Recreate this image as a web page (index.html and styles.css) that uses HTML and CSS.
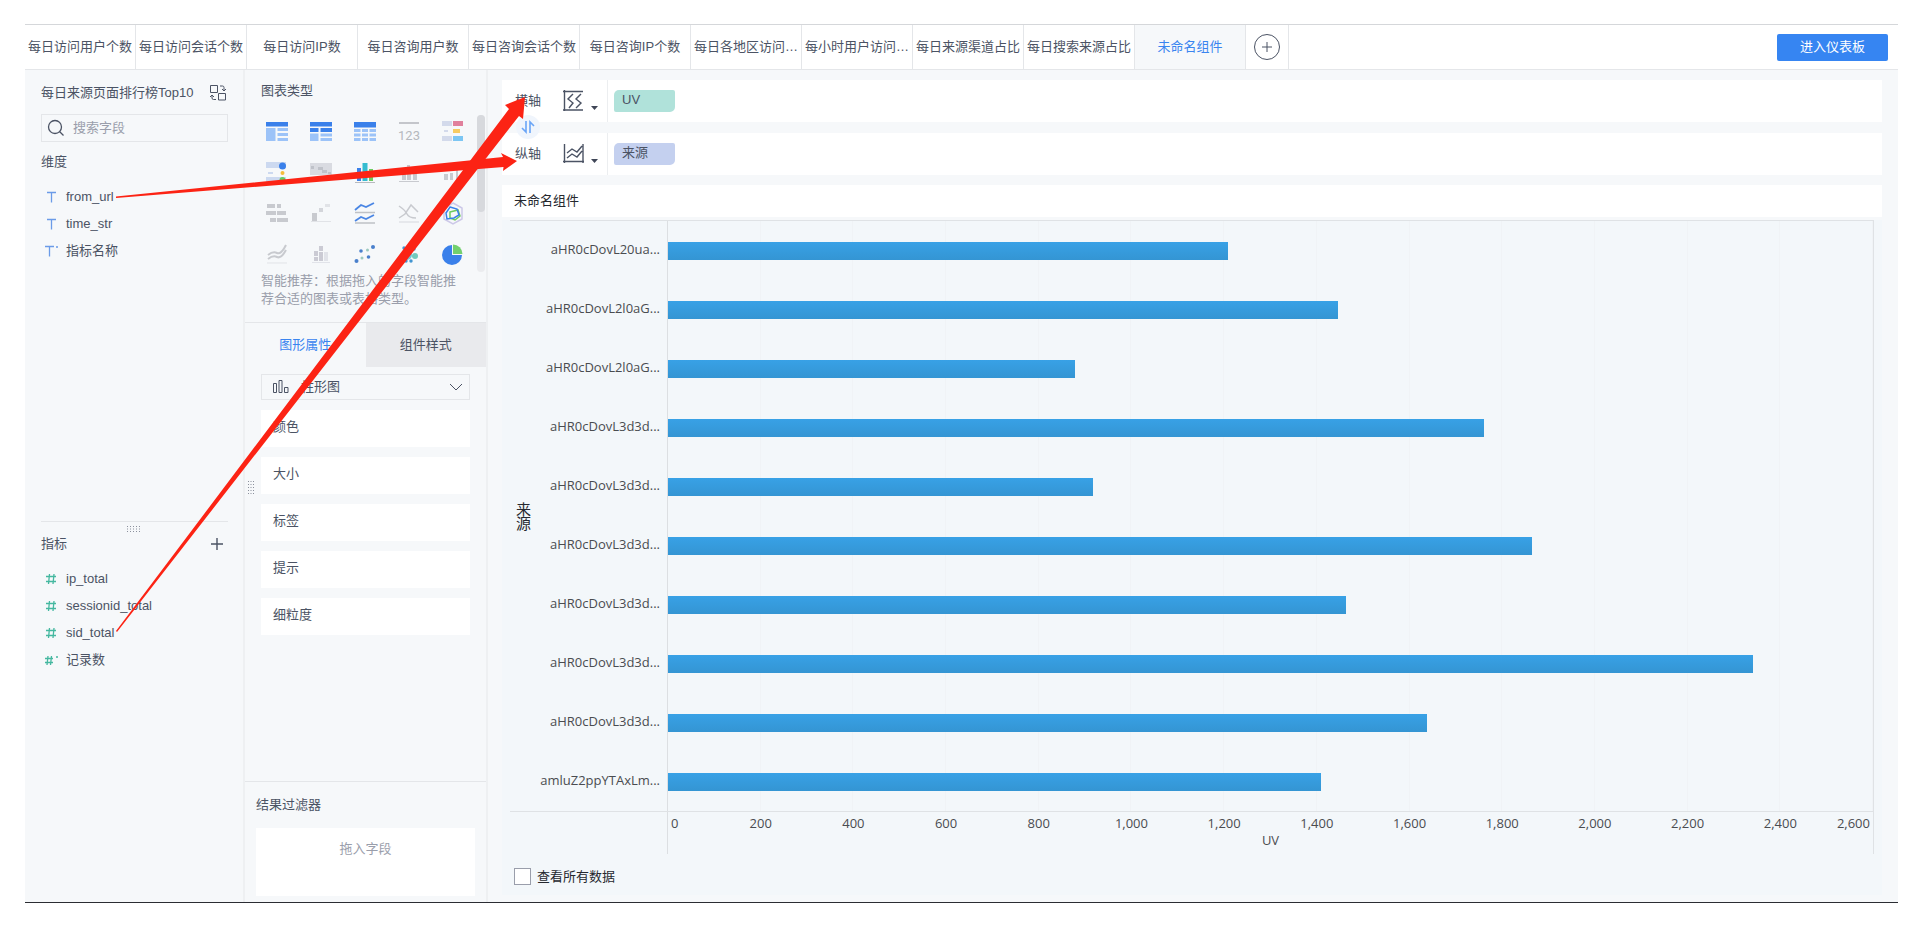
FILE: index.html
```html
<!DOCTYPE html>
<html lang="zh-CN">
<head>
<meta charset="utf-8">
<title>未命名组件</title>
<link rel="stylesheet" href="styles.css">
</head>
<body>
<div class="app">
  <header class="topbar">
    <nav class="tabs">
      <button class="tab">每日访问用户个数</button>
      <button class="tab">每日访问会话个数</button>
      <button class="tab">每日访问IP数</button>
      <button class="tab">每日咨询用户数</button>
      <button class="tab">每日咨询会话个数</button>
      <button class="tab">每日咨询IP个数</button>
      <button class="tab">每日各地区访问…</button>
      <button class="tab">每小时用户访问…</button>
      <button class="tab">每日来源渠道占比</button>
      <button class="tab">每日搜索来源占比</button>
      <button class="tab tab-active">未命名组件</button>
      <button class="tab-add" aria-label="添加组件"><svg width="28" height="28" viewBox="0 0 28 28" fill="none" stroke="#4b5364"><circle cx="14" cy="14" r="12.5"/><path d="M9 14h10M14 9v10"/></svg></button>
    </nav>
    <button class="enter">进入仪表板</button>
  </header>

  <div class="body">
    <aside class="fields">
      <section class="dims">
        <div class="table-head">
          <span>每日来源页面排行榜Top10</span>
          <button class="icon-btn" aria-label="切换表"><svg width="18" height="18" viewBox="0 0 18 18" fill="none" stroke="#4b5364"><path d="M1.500 1.500h7v7h-7zM9.500 9.500h7v6.500h-7zM11 2h2.500q1.500 0 1.500 1.500v3M13 5l2 2 2-2M7 15.500h-2.500q-1.500 0-1.500-1.500v-3M1 13l2-2 2 2"/></svg></button>
        </div>
        <label class="search">
          <svg width="18" height="18" viewBox="0 0 18 18" fill="none" stroke="#4b5364" stroke-width="1.300"><circle cx="8" cy="8" r="6.500"/><path d="M12.500 12.500l4 4"/></svg>
          <input type="text" placeholder="搜索字段" aria-label="搜索字段">
        </label>
        <h2 class="title">维度</h2>
        <ul class="list">
          <li><svg class="dim-icon" viewBox="0 0 14 14"><path d="M1 2.500h9M5.500 2.500v10"/></svg>from_url</li>
          <li><svg class="dim-icon" viewBox="0 0 14 14"><path d="M1 2.500h9M5.500 2.500v10"/></svg>time_str</li>
          <li><svg class="dim-icon" viewBox="0 0 14 14"><path d="M-1 2.500h9M3.500 2.500v10M10 3h2"/></svg>指标名称</li>
        </ul>
      </section>
      <section class="measures">
        <svg class="grip-h" width="15" height="6" viewBox="0 0 15 6" stroke="#8b909c" stroke-dasharray="1 2"><path d="M0 .5h15M0 3h15M0 5.500h15"/></svg>
        <div class="measure-head">
          <h2 class="title">指标</h2>
          <button class="icon-btn" aria-label="添加指标"><svg width="14" height="14" viewBox="0 0 14 14" fill="none" stroke="#4b5364" stroke-width="1.400"><path d="M1 7h12M7 1v12"/></svg></button>
        </div>
        <ul class="list">
          <li><svg class="num-icon" viewBox="0 0 14 14"><path d="M0 4.500h10M0 9.500h10M3.500 2l-1 10M8 2l-1 10"/></svg>ip_total</li>
          <li><svg class="num-icon" viewBox="0 0 14 14"><path d="M0 4.500h10M0 9.500h10M3.500 2l-1 10M8 2l-1 10"/></svg>sessionid_total</li>
          <li><svg class="num-icon" viewBox="0 0 14 14"><path d="M0 4.500h10M0 9.500h10M3.500 2l-1 10M8 2l-1 10"/></svg>sid_total</li>
          <li><svg class="num-icon" viewBox="0 0 14 14"><path d="M-1 5.500h8M-1 9.500h8M2 3l-1 9M5.500 3l-1 9M10 4h2"/></svg>记录数</li>
        </ul>
      </section>
    </aside>

    <aside class="config">
      <section class="types">
        <h2 class="title">图表类型</h2>
        <div class="type-scroll">
          <div class="type-grid">
            <svg viewBox="0 0 22 20"><path fill="#3a80ea" d="M0 0h22v4.500H0z"/><path fill="#9cc3f8" d="M0 6h9.500v13H0zM11.500 6H22v3H11.500zM11.500 11H22v3H11.500zM11.500 16H22v3H11.500z"/></svg>
            <svg viewBox="0 0 22 20"><path fill="#3a80ea" d="M0 0h22v4.500H0zM0 6h8.500v4H0zM10.500 6H22v4H10.500z"/><path fill="#9cc3f8" d="M0 11.500h8.500V19H0zM10.500 11.500H22v3H10.500zM10.500 16H22v3H10.500z"/></svg>
            <svg viewBox="0 0 22 20"><path fill="#3a80ea" d="M0 0h22v5.500H0z"/><path fill="#9cc3f8" d="M0 7h6.500v3H0zM8 7h6v3H8zM15.500 7H22v3h-6.500zM0 11.500h6.500v3H0zM8 11.500h6v3H8zM15.500 11.500H22v3h-6.500zM0 16h6.500v3H0zM8 16h6v3H8zM15.500 16H22v3h-6.500z"/></svg>
            <svg viewBox="0 0 22 20"><path fill="#c4c6cb" d="M1 0h20v2H1z"/><text x="11" y="18" text-anchor="middle" class="kpi">123</text></svg>
            <svg viewBox="0 0 22 20"><path fill="#d3daeb" d="M0-1h10v5H0zM2 8h4v2H2zM0 14h10v5H0z"/><path fill="#e0809c" d="M11-1h10v5H11z"/><path fill="#f6cb62" d="M11 7h7v4h-7z"/><path fill="#7cc6f3" d="M11 14h10v5H11z"/></svg>
            <svg viewBox="0 0 22 20"><path fill="#ccd9f0" d="M0-1h20v6H0zM2 9h5v2H2zM0 14h20v5H0z"/><circle cx="16.500" cy="3" r="3.500" fill="#3a80ea"/><circle cx="16.500" cy="10" r="2" fill="#f5bd3a"/><circle cx="16.500" cy="17" r="3" fill="#62cf62"/></svg>
            <svg viewBox="0 0 22 20"><path fill="#d9dbe1" d="M0 0h22v12H0z"/><path fill="#bfc2c9" d="M1 3h3v3H1zM8 4h5v3H8zM12 7h5v3h-5zM18 9h3v2h-3z"/></svg>
            <svg viewBox="0 0 22 20"><path fill="#3a80ea" d="M3 5h4v6H3zM3 13h4v5H3z"/><path fill="#35bcd0" d="M8.500 0h5v11h-5zM8.500 13h5v5h-5z"/><path fill="#6ecb5e" d="M15 6h4v5h-4zM15 13h4v5h-4z"/><path fill="#b7babf" d="M1 19h20v1H1z"/></svg>
            <svg viewBox="0 0 22 20"><path fill="#c8cacf" d="M9 2h3v3H9zM4 11h4v6H4zM9 9h4v8H9zM15 11h4v6h-4zM1 18h20v1H1z"/></svg>
            <svg viewBox="0 0 22 20"><path fill="#c8cacf" d="M2 11h4v6H2zM8 10h3v7H8zM14 6h2v11h-2z"/></svg>
            <svg viewBox="0 0 22 20"><path fill="#c8cacf" d="M1 0h8v4H1zM11 0h4v4h-4zM0 7h10v4H0zM11 7h9v4h-9zM4 14h6v4H4zM11 14h11v4H11z"/></svg>
            <svg viewBox="0 0 22 20"><path fill="#c8cacf" d="M2 9h5v8H2z"/><path fill="#d3d5da" d="M9 4h4v4H9z"/><path fill="#e1e3e7" d="M15 0h5v3h-5zM1 17h20v1H1z"/></svg>
            <svg viewBox="0 0 22 20" fill="none" stroke="#4a86e4" stroke-width="1.800"><path d="M1 6L7 1l5 2 8-4M1 17l6-4 5 2 8-4"/><path stroke="#bfc1c6" stroke-width="1.500" d="M1 8.500h20M1 19h20"/></svg>
            <svg viewBox="0 0 22 20" fill="none" stroke="#c8cacf" stroke-width="1.500"><path d="M1 2q6 4 8 8t9 4M1 14l6-4 6-9 7 7"/><path stroke="#e1e3e7" d="M1 18h20"/></svg>
            <svg viewBox="0 0 22 20" fill="none" stroke-width="1.500"><path stroke="#ccc8e8" d="M11-1l9 5v11l-9 5-9-5V4z"/><path stroke="#6ecb5e" d="M8 8l8-2 2 6-5 4-5-2z"/><path stroke="#3a80ea" d="M8 3l7 2 2 6-5 3-7 1-1-6z"/></svg>
            <svg viewBox="0 0 22 20" fill="none" stroke="#c8cacf" stroke-width="2"><path d="M2 10q5-4 9-2t9-8M2 14q5-4 9-2t9-7"/><path stroke="#e1e3e7" stroke-width="1" d="M1 18h20"/></svg>
            <svg viewBox="0 0 22 20"><path fill="#cbcbd4" d="M4 6h4v5H4zM4 12h4v4H4zM9 1h4v5H9zM9 7h4v9H9z"/><path fill="#e1e3e9" d="M14 7h4v9h-4zM2 17h18v1H2z"/></svg>
            <svg viewBox="0 0 22 20"><g fill="#4a80cc"><circle cx="7" cy="6" r="1.800"/><circle cx="19" cy="2" r="2"/><circle cx="14.500" cy="12" r="1.800"/><circle cx="2.500" cy="16" r="2"/></g><g fill="#9cc9bf"><circle cx="13.500" cy="5" r="1.500"/><circle cx="8" cy="13" r="1.500"/></g></svg>
            <svg viewBox="0 0 22 20"><circle cx="9" cy="10" r="5" fill="#70c7d8"/><circle cx="17" cy="11" r="3" fill="#72c9bd"/><g fill="#4295d1"><circle cx="6" cy="3" r="1.700"/><circle cx="16" cy="4" r="1.700"/><circle cx="8" cy="16" r="1.700"/><circle cx="13" cy="16" r="1.700"/></g></svg>
            <svg viewBox="0 0 22 20"><path fill="#3a80ea" d="M10 0v10h10A10 10 0 1 1 10 0z"/><path fill="#73d06e" d="M11-.5a9.500 9.500 0 0 1 9.500 9.500H11z"/></svg>
          </div>
          <div class="scrollbar"><div class="thumb"></div></div>
        </div>
        <p class="hint">智能推荐：根据拖入的字段智能推荐合适的图表或表格类型。</p>
      </section>

      <section class="attrs">
        <div class="attr-tabs">
          <button class="attr-tab attr-active">图形属性</button>
          <button class="attr-tab">组件样式</button>
        </div>
        <div class="attr-list">
          <div class="shape">
            <svg width="16" height="14" viewBox="0 0 16 14" fill="none" stroke="#4b5364"><path d="M.5 3.500h3v9h-3zM6 .5h3v12H6zM11.500 7.500h3.500v5h-3.500z"/></svg>
            <select aria-label="图形"><option>柱形图</option></select>
            <svg width="14" height="8" viewBox="0 0 14 8" fill="none" stroke="#4b5364"><path d="M1 1l6 6 6-6"/></svg>
          </div>
          <div class="slot">颜色</div>
          <div class="slot">大小</div>
          <div class="slot">标签</div>
          <div class="slot">提示</div>
          <div class="slot">细粒度</div>
        </div>
        <svg class="grip-v" width="6" height="15" viewBox="0 0 6 15" stroke="#8b909c" stroke-dasharray="1 2"><path d="M.5 0v15M3 0v15M5.500 0v15"/></svg>
      </section>

      <section class="filter">
        <h2 class="title">结果过滤器</h2>
        <div class="drop">拖入字段</div>
      </section>
    </aside>

    <main class="work">
      <div class="shelves">
        <div class="shelf">
          <span class="shelf-name">横轴</span>
          <button class="axis-btn" aria-label="横轴设置"><svg width="36" height="22" viewBox="0 0 36 22" fill="none" stroke="#4b5364" stroke-width="1.400"><path d="M1.500 0v21M0 1.500h20M0 20h20M10 4l-5 5 5 4-4 5M18 4l-5 5 5 4-5 5"/><path fill="#3f4657" stroke="none" d="M28 16h7l-3.500 4z"/></svg></button>
          <span class="pill pill-green">UV</span>
        </div>
        <div class="shelf">
          <span class="shelf-name">纵轴</span>
          <button class="axis-btn" aria-label="纵轴设置"><svg width="36" height="22" viewBox="0 0 36 22" fill="none" stroke="#4b5364" stroke-width="1.400"><path d="M1.500 1v19M20 1v19M0 18.500h21M4 10l5-4 5 3 5-6M4 15l5-4 5 3 5-6"/><path fill="#3f4657" stroke="none" d="M28 16h7l-3.500 4z"/></svg></button>
          <span class="pill pill-blue">来源</span>
        </div>
        <button class="swap" aria-label="交换"><svg width="14" height="12" viewBox="0 0 14 12" fill="none" stroke="#6aa5f7" stroke-width="1.600"><path d="M5 0v11l-4-4M9 12V1l4 4"/></svg></button>
      </div>

      <h1 class="chart-title">未命名组件</h1>

      <div class="chart">
        <div class="frame">
          <div class="axis-name"><span>来源</span></div>
          <div class="cats">
            <span>aHR0cDovL20ua...</span><span>aHR0cDovL2l0aG...</span><span>aHR0cDovL2l0aG...</span><span>aHR0cDovL3d3d...</span><span>aHR0cDovL3d3d...</span><span>aHR0cDovL3d3d...</span><span>aHR0cDovL3d3d...</span><span>aHR0cDovL3d3d...</span><span>aHR0cDovL3d3d...</span><span>amluZ2ppYTAxLm...</span>
          </div>
          <div class="plot">
            <div class="row"><div class="bar" style="width:46.5%"></div></div>
            <div class="row"><div class="bar" style="width:55.6%"></div></div>
            <div class="row"><div class="bar" style="width:33.8%"></div></div>
            <div class="row"><div class="bar" style="width:67.7%"></div></div>
            <div class="row"><div class="bar" style="width:35.3%"></div></div>
            <div class="row"><div class="bar" style="width:71.7%"></div></div>
            <div class="row"><div class="bar" style="width:56.3%"></div></div>
            <div class="row"><div class="bar" style="width:90%"></div></div>
            <div class="row"><div class="bar" style="width:63%"></div></div>
            <div class="row"><div class="bar" style="width:54.2%"></div></div>
          </div>
        </div>
        <div class="x-axis">
          <div class="ticks">
            <span>0</span><span>200</span><span>400</span><span>600</span><span>800</span><span>1,000</span><span>1,200</span><span>1,400</span><span>1,600</span><span>1,800</span><span>2,000</span><span>2,200</span><span>2,400</span><span>2,600</span>
          </div>
          <div class="x-name">UV</div>
        </div>
        <label class="all-data"><input type="checkbox">查看所有数据</label>
      </div>
    </main>
  </div>

  <svg class="arrows" width="520" height="640" viewBox="0 0 520 640" aria-hidden="true">
    <path d="M91 171.500L478 132 476 128 492 136 478 146 478.500 142 91 173z"/>
    <path d="M91 606L484 84 480 80 500 72 498 94 494 91 92 607z"/>
  </svg>
</div>
</body>
</html>
```

FILE: styles.css
```css
* { box-sizing: border-box; }
body {
  margin: 0;
  min-height: 100vh;
  padding: 24px 10px 39px 25px;
  display: flex;
  background: #fff;
  color: #4b5364;
  font: 13px/18px "Liberation Sans", "Noto Sans CJK SC", sans-serif;
}
button, input, select { font: inherit; color: inherit; margin: 0; }
button { border: 0; padding: 0; background: none; cursor: pointer; }
svg { display: block; flex: none; overflow: visible; }
h1, h2, p, ul { margin: 0; padding: 0; }
.title { font-size: 13px; font-weight: 400; line-height: 18px; }

.app {
  position: relative;
  flex: 1;
  min-width: 0;
  display: flex;
  flex-direction: column;
  border-top: 1px solid #d5d7da;
  border-bottom: 1px solid #2b2d33;
  background: #f6f8fa;
}
.topbar {
  display: flex;
  align-items: center;
  justify-content: space-between;
  padding-right: 10px;
  height: 45px;
  background: #fff;
  border-bottom: 1px solid #e4e6e9;
}
.tabs { display: flex; align-self: stretch; }
.tab {
  width: 111px;
  border-right: 1px solid #e4e6e9;
  white-space: nowrap;
}
.tab-active { color: #3a85f0; background: #f6f8fa; }
.tab-add {
  width: 43px;
  display: grid;
  place-items: center;
  border-right: 1px solid #e4e6e9;
}
.enter {
  width: 111px;
  height: 27px;
  border-radius: 2px;
  background: #3685f2;
  color: #fff;
}

.body { flex: 1; display: flex; min-height: 0; }

.fields {
  width: 220px;
  display: flex;
  flex-direction: column;
  padding: 0 15px 0 16px;
  border-right: 2px solid #eef0f2;
}
.dims { height: 452px; border-bottom: 1px solid #e4e6e9; padding-top: 14px; }
.table-head, .measure-head { display: flex; align-items: center; justify-content: space-between; }
.table-head { padding-right: 1px; white-space: nowrap; }
.search {
  display: flex;
  align-items: center;
  gap: 8px;
  height: 28px;
  margin: 12px 0 11px;
  padding: 0 5px;
  border: 1px solid #e4e6e9;
}
.search input { flex: 1; min-width: 0; padding: 0; border: 0; background: none; outline: 0; }
.search input::placeholder { color: #9a9eab; opacity: 1; }
.list { list-style: none; margin-top: 12px; }
.list li { display: flex; align-items: center; gap: 6px; height: 27px; padding-left: 5px; }
.list svg { width: 14px; height: 14px; fill: none; stroke-width: 1.3; }
.dim-icon { stroke: #6b9be8; }
.num-icon { stroke: #45b8a0; }
.measures { padding-top: 4px; }
.grip-h { margin: 0 auto 3px; }
.measure-head { padding-right: 4px; }
.measures .list { margin-top: 12px; }

.config {
  width: 243px;
  display: flex;
  flex-direction: column;
  border-right: 2px solid #eef0f2;
}
.types { height: 253px; padding: 12px 0 0 16px; border-bottom: 1px solid #e4e6e9; }
.type-scroll { display: flex; justify-content: space-between; margin-top: 15px; padding-right: 1px; }
.type-grid {
  display: grid;
  grid-template-columns: repeat(5, 22px);
  grid-auto-rows: 20px;
  gap: 21px 22px;
  padding: 7px 0 0 5px;
}
.type-grid svg { width: 22px; height: 20px; }
.kpi { font-family: Roboto, sans-serif; font-size: 13px; fill: #b5b8be; }
.scrollbar { width: 8px; height: 157px; border-radius: 4px; background: #ebecef; }
.thumb { height: 97px; border-radius: 4px; background: #d7d9dd; }
.hint { width: 206px; color: #9a9eab; }
.attrs { position: relative; flex: 1; }
.attr-tabs { display: grid; grid-template-columns: 1fr 1fr; }
.attr-tab { height: 44px; background: #e9eaed; }
.attr-active { color: #3a85f0; background: none; }
.attr-list { display: flex; flex-direction: column; gap: 10px; padding: 7px 16px; }
.shape {
  display: flex;
  align-items: center;
  gap: 8px;
  height: 26px;
  padding: 0 6px 0 11px;
  border: 1px solid #e4e6e9;
}
.shape select { flex: 1; padding: 0 0 0 4px; border: 0; background: none; appearance: none; outline: 0; }
.slot { height: 37px; padding: 8px 12px; background: #fff; }
.grip-v { position: absolute; left: 3px; top: 158px; }
.filter { height: 121px; padding: 14px 11px 7px; border-top: 1px solid #e4e6e9; }
.drop { height: 68px; margin-top: 14px; padding-top: 12px; background: #fff; text-align: center; color: #9a9eab; }

.work { flex: 1; min-width: 0; display: flex; flex-direction: column; padding: 10px 16px 7px 14px; }
.shelves { position: relative; display: grid; gap: 11px; }
.shelf { display: flex; align-items: center; height: 42px; padding-left: 13px; background: #fff; }
.shelf-name { width: 48px; }
.axis-btn { width: 45px; height: 42px; border-right: 1px solid #eceef0; }
.pill {
  width: 61px;
  height: 22px;
  margin-left: 6px;
  padding: 1px 8px;
  border-radius: 5px 2px 5px 2px;
}
.pill-green { background: #b0e2da; }
.pill-blue { background: #c4d0ef; }
.swap {
  position: absolute;
  left: 14px;
  top: 35px;
  width: 24px;
  height: 24px;
  border-radius: 50%;
  display: grid;
  place-items: center;
  background: #f0f5fc;
}
.chart-title {
  height: 32px;
  margin-top: 10px;
  padding: 7px 12px;
  background: #fff;
  color: #25282e;
  font-size: 13px;
  font-weight: 400;
  line-height: 18px;
}
.chart {
  flex: 1;
  display: flex;
  flex-direction: column;
  margin-top: 3px;
  background: #f3f7fa;
  color: #4a4c50;
  font-family: "Open Sans", "Noto Sans CJK SC", sans-serif;
}
.frame {
  flex: 1;
  display: flex;
  margin: 0 8px;
  border-top: 1px solid #dfe2e5;
  border-bottom: 1px solid #dfe2e5;
}
.axis-name { width: 28px; display: grid; place-items: center start; padding-left: 6px; color: #25282e; }
.axis-name span { width: 15px; font-size: 15px; line-height: 14px; }
.cats { width: 129px; display: flex; flex-direction: column; padding-right: 7px; text-align: right; }
.cats span { flex: 1; display: flex; align-items: center; justify-content: flex-end; padding-bottom: 4px; white-space: nowrap; }
.plot {
  flex: 1;
  display: flex;
  flex-direction: column;
  border-left: 1px solid #dcdfe2;
  border-right: 1px solid #dfe2e5;
  background: repeating-linear-gradient(to right, transparent 0 calc(100% / 13 - 1px), #f0f3f6 calc(100% / 13 - 1px) calc(100% / 13));
}
.row { flex: 1; display: flex; align-items: center; }
.bar { height: 18px; background: linear-gradient(#38a1e6, #3495d3); }
.x-axis {
  height: 42px;
  margin: 0 8px 0 165px;
  border-left: 1px solid #dcdfe2;
  border-right: 1px solid #dfe2e5;
}
.ticks { display: grid; grid-template-columns: 1fr repeat(12, 2fr) 1fr; padding-top: 2px; text-align: center; }
.ticks span:first-child { text-align: left; padding-left: 3px; }
.ticks span:last-child { text-align: right; padding-right: 3px; }
.x-name { text-align: center; line-height: 16px; }
.all-data {
  display: flex;
  align-items: center;
  gap: 6px;
  padding: 13px 12px 10px;
  color: #25282e;
}
.all-data input {
  appearance: none;
  width: 17px;
  height: 17px;
  border: 1px solid #9a9eab;
  background: #fff;
}
.arrows { position: absolute; left: 0; top: 0; fill: #fc2314; pointer-events: none; }
```
